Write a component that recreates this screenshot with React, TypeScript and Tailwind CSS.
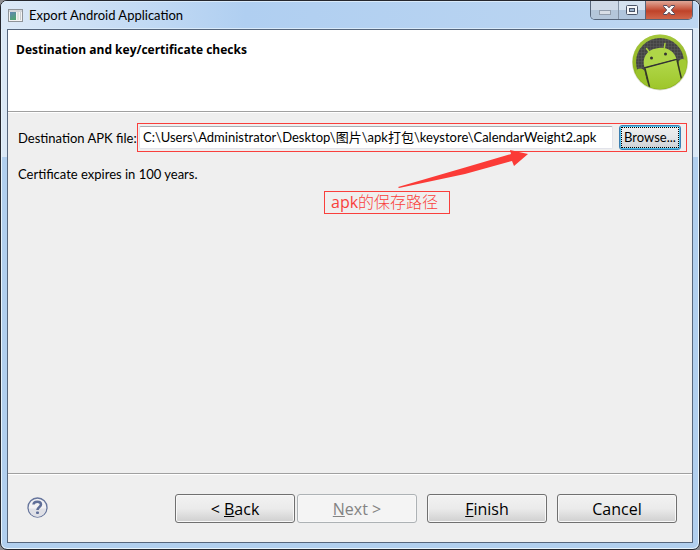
import type { ReactNode } from "react";

function AppIcon() {
  return (
    <svg width="15" height="13" viewBox="0 0 15 13" aria-hidden="true">
      <defs>
        <linearGradient id="pane" x1="0" y1="0" x2="0.4" y2="1">
          <stop offset="0" stopColor="#5f86b4" />
          <stop offset="1" stopColor="#4fa274" />
        </linearGradient>
      </defs>
      <rect x="0.5" y="0.5" width="14" height="12" fill="#f4f4f4" stroke="#8f9499" />
      <rect x="1" y="1" width="13" height="2" fill="#d3d6da" />
      <rect x="2" y="3" width="6" height="8" fill="url(#pane)" />
      <rect x="9" y="3" width="2" height="8" fill="#dde5dd" />
      <rect x="12" y="3" width="1" height="8" fill="#c9cdd0" />
    </svg>
  );
}

function AndroidBadge() {
  return (
    <svg className="size-[57px] shrink-0" viewBox="0 0 57 57" role="img" aria-label="Android">
      <defs>
        <linearGradient id="ring" x1="0" y1="0" x2="0" y2="1">
          <stop offset="0" stopColor="#a5c83c" />
          <stop offset="1" stopColor="#86ac14" />
        </linearGradient>
        <linearGradient id="robot" x1="0" y1="0" x2="0" y2="1">
          <stop offset="0" stopColor="#b2d94c" />
          <stop offset="1" stopColor="#9cc427" />
        </linearGradient>
        <pattern id="mesh" width="3" height="3" patternUnits="userSpaceOnUse">
          <rect width="3" height="3" fill="#444444" />
          <path d="M0 0H3M0 0V3" stroke="#5c5c5c" strokeWidth="1" />
        </pattern>
        <clipPath id="inner">
          <circle cx="28" cy="28" r="27" />
        </clipPath>
      </defs>
      <circle cx="28" cy="28.500" r="28" fill="#d9ddcb" />
      <circle cx="28" cy="28" r="27.500" fill="url(#ring)" />
      <circle cx="28" cy="28" r="24" fill="url(#mesh)" />
      <g clipPath="url(#inner)">
        <path d="M4 37C5 33.500 11.500 33.500 12.500 37L17 56L4 50Z" fill="#9bc32b" />
        <path d="M46.500 29C46.500 24.500 53 23.500 54.500 28L56 42L50 48Z" fill="#a2ca33" />
        <path d="M13 34L45 25.500L52 48L40 58H18Z" fill="url(#robot)" />
        <path d="M12.500 33.500C9.500 24 15 16 24 14.500C33 12 42 16 44.500 25Z" fill="#afd648" />
        <path d="M12 34L45.500 25.200" stroke="#333" strokeWidth="1.300" />
        <path d="M13 34.500L17.500 53" stroke="#343a22" strokeWidth="1.500" />
        <path d="M45 26L49.500 45" stroke="#343a22" strokeWidth="1.500" />
        <path d="M14.500 14.500L18 19M33 9.500L32 15.500" stroke="#a9d23b" strokeWidth="1.500" strokeLinecap="round" />
        <circle cx="19.500" cy="24" r="1.500" fill="#333" />
        <circle cx="33.500" cy="20" r="1.500" fill="#333" />
      </g>
    </svg>
  );
}

function HelpIcon() {
  return (
    <svg width="21" height="21" viewBox="0 0 21 21" aria-hidden="true">
      <circle cx="10.500" cy="10.500" r="9.500" fill="#f2f2f4" stroke="#66759c" strokeWidth="1.300" />
      <path d="M2 11.500H19A8.500 8.500 0 0 1 2 11.500Z" fill="#dfe0e6" />
      <path d="M6.500 7.500C6.800 3.800 14 3.900 14 7.600C14 10 10.500 10 10.500 13" fill="none" stroke="#5f6e98" strokeWidth="2.500" />
      <rect x="9" y="14.500" width="3" height="2.500" rx="1" fill="#5f6e98" />
    </svg>
  );
}

function CaptionButtons() {
  return (
    <div className="mr-[6px] flex h-[19px] overflow-hidden rounded-b-[5px] border border-t-0 border-[#56657a]">
      <button type="button" aria-label="Minimize" className="flex w-7 items-center justify-center border-r border-[#8593a5] bg-linear-to-b from-[#cfdae8] from-50% to-[#b4c6da] to-50% pt-1">
        <svg width="12" height="5" viewBox="0 0 12 5" aria-hidden="true">
          <rect x="0.500" y="0.500" width="11" height="4" fill="#d8dee6" stroke="#929dac" />
        </svg>
      </button>
      <button type="button" aria-label="Maximize" className="flex w-[27px] items-center justify-center border-r border-[#56657a] bg-linear-to-b from-[#d5e1ee] from-50% to-[#b0c5dd] to-50%">
        <svg width="12" height="10" viewBox="0 0 12 10" aria-hidden="true">
          <rect x="0.500" y="0.500" width="11" height="9" rx="1" fill="#f6f7f9" stroke="#4b5467" />
          <rect x="3.500" y="3.500" width="5" height="3" fill="#9fb4cd" stroke="#4b5467" />
        </svg>
      </button>
      <button type="button" aria-label="Close" className="flex w-[46px] items-center justify-center bg-linear-to-b from-[#dfa798] via-[#bf4229] via-55% to-[#d0654a]">
        <svg width="12" height="10" viewBox="0 0 12 10" aria-hidden="true">
          <path d="M0.500 0.500H4L6 2.800L8 0.500H11.500V1.500L8.300 5L11.500 8.500V9.500H8L6 7.200L4 9.500H0.500V8.500L3.700 5L0.500 1.500Z" fill="#fafafa" stroke="#534a5c" />
        </svg>
      </button>
    </div>
  );
}

function WizardButton({ children, disabled = false }: { children: ReactNode; disabled?: boolean }) {
  return (
    <button
      type="button"
      disabled={disabled}
      className="h-[29px] w-[120px] rounded-[3px] border border-[#707070] bg-linear-to-b from-[#f2f2f2] via-[#ebebeb] via-50% to-[#cfcfcf] pt-px font-['Open_Sans',sans-serif] text-base/6 inset-ring inset-ring-[#f8f8f8] disabled:border-[#adb2b5] disabled:bg-[#f4f4f4] disabled:bg-none disabled:text-[#838383]"
    >
      {children}
    </button>
  );
}

export default function App() {
  return (
    <div className="relative h-screen overflow-hidden bg-[#8c8c90] font-['Lato','Noto_Sans_CJK_SC',sans-serif] text-[13px]/5 text-black">
      <div className="flex h-full flex-col rounded-[7px] border border-[#25272e] bg-linear-to-b from-[#dbe8f5] from-[156px] to-[#b1cfee] to-[156px] px-[6px] pb-[6px] inset-ring inset-ring-[#e8f4fc]">
        <div className="-mx-[6px] flex h-7 shrink-0 items-start justify-between rounded-t-[6px] bg-linear-to-r from-[#dce9f7] from-0% via-[#b0cff1] via-35% to-[#bdd6f1] inset-ring inset-ring-[#d9eafa]">
          <h1 className="flex h-7 items-center gap-[6px] pl-[7px] font-normal">
            <AppIcon />
            Export Android Application
          </h1>
          <CaptionButtons />
        </div>

        <main className="flex min-h-0 flex-1 flex-col border border-[#56667c] bg-[#efefef]">
          <header className="flex h-[82px] shrink-0 items-start justify-between border-b border-[#a0a0a0] bg-white pt-1 pr-[3px] pl-2">
            <h2 className="pt-[6px] font-['Open_Sans',sans-serif] text-xs/5 font-bold">Destination and key/certificate checks</h2>
            <AndroidBadge />
          </header>

          <div className="flex-1 border-t border-white pt-[10px] pr-[5px] pl-[10px]">
            <div className="flex items-center gap-[3px]">
              <label htmlFor="apk" className="w-[116px] shrink-0 whitespace-nowrap">Destination APK file:</label>
              <div className="flex h-[29px] min-w-0 flex-1 items-center gap-[6px] border border-[#f93f3c] pr-[5px] pl-px">
                <input
                  id="apk"
                  type="text"
                  defaultValue="C:\Users\Administrator\Desktop\图片\apk打包\keystore\CalendarWeight2.apk"
                  className="h-[23px] min-w-0 flex-1 rounded-[2px] border border-[#e2e3ea] border-t-[#abadb3] bg-white px-[3px] pb-[2px]"
                />
                <button type="button" className="h-[25px] w-[62px] rounded-[3px] border border-[#3c7fb1] bg-linear-to-b from-[#f0f0f0] via-[#e4e6e8] via-50% to-[#cbced2] p-px inset-ring inset-ring-[#4cc1ee]">
                  <span className="flex h-full items-center justify-center border border-dotted border-black pb-[2px]">Browse...</span>
                </button>
              </div>
            </div>
            <p className="mt-3">Certificate expires in 100 years.</p>
          </div>

          <footer className="flex h-[69px] shrink-0 items-center justify-between border-t border-[#a0a0a0] pr-[15px] pl-[19px] inset-shadow-[0_1px_#ffffff]">
            <button type="button" aria-label="Help" className="pb-[2px]"><HelpIcon /></button>
            <div className="flex gap-[10px]">
              <div className="flex gap-[2px]">
                <WizardButton>&lt; <u>B</u>ack</WizardButton>
                <WizardButton disabled><u>N</u>ext &gt;</WizardButton>
              </div>
              <WizardButton><u>F</u>inish</WizardButton>
              <WizardButton>Cancel</WizardButton>
            </div>
          </footer>
        </main>
      </div>

      <svg className="pointer-events-none absolute top-[148px] left-[398px]" width="132" height="42" viewBox="0 0 132 42" aria-hidden="true">
        <path d="M0 39L67 19.500L113 6L112 2L130 6L116 18L114 13L67 26L1 40Z" fill="#fb3b37" />
      </svg>
      <div className="absolute top-[191px] left-[324px] h-[23px] w-[126px] border border-[#f93f3c] pl-[6px] font-['Open_Sans','Noto_Sans_CJK_SC',sans-serif] text-base/5 font-light whitespace-nowrap text-[#f93f3c]">
        <span className="font-normal">apk</span>的保存路径
      </div>
    </div>
  );
}
